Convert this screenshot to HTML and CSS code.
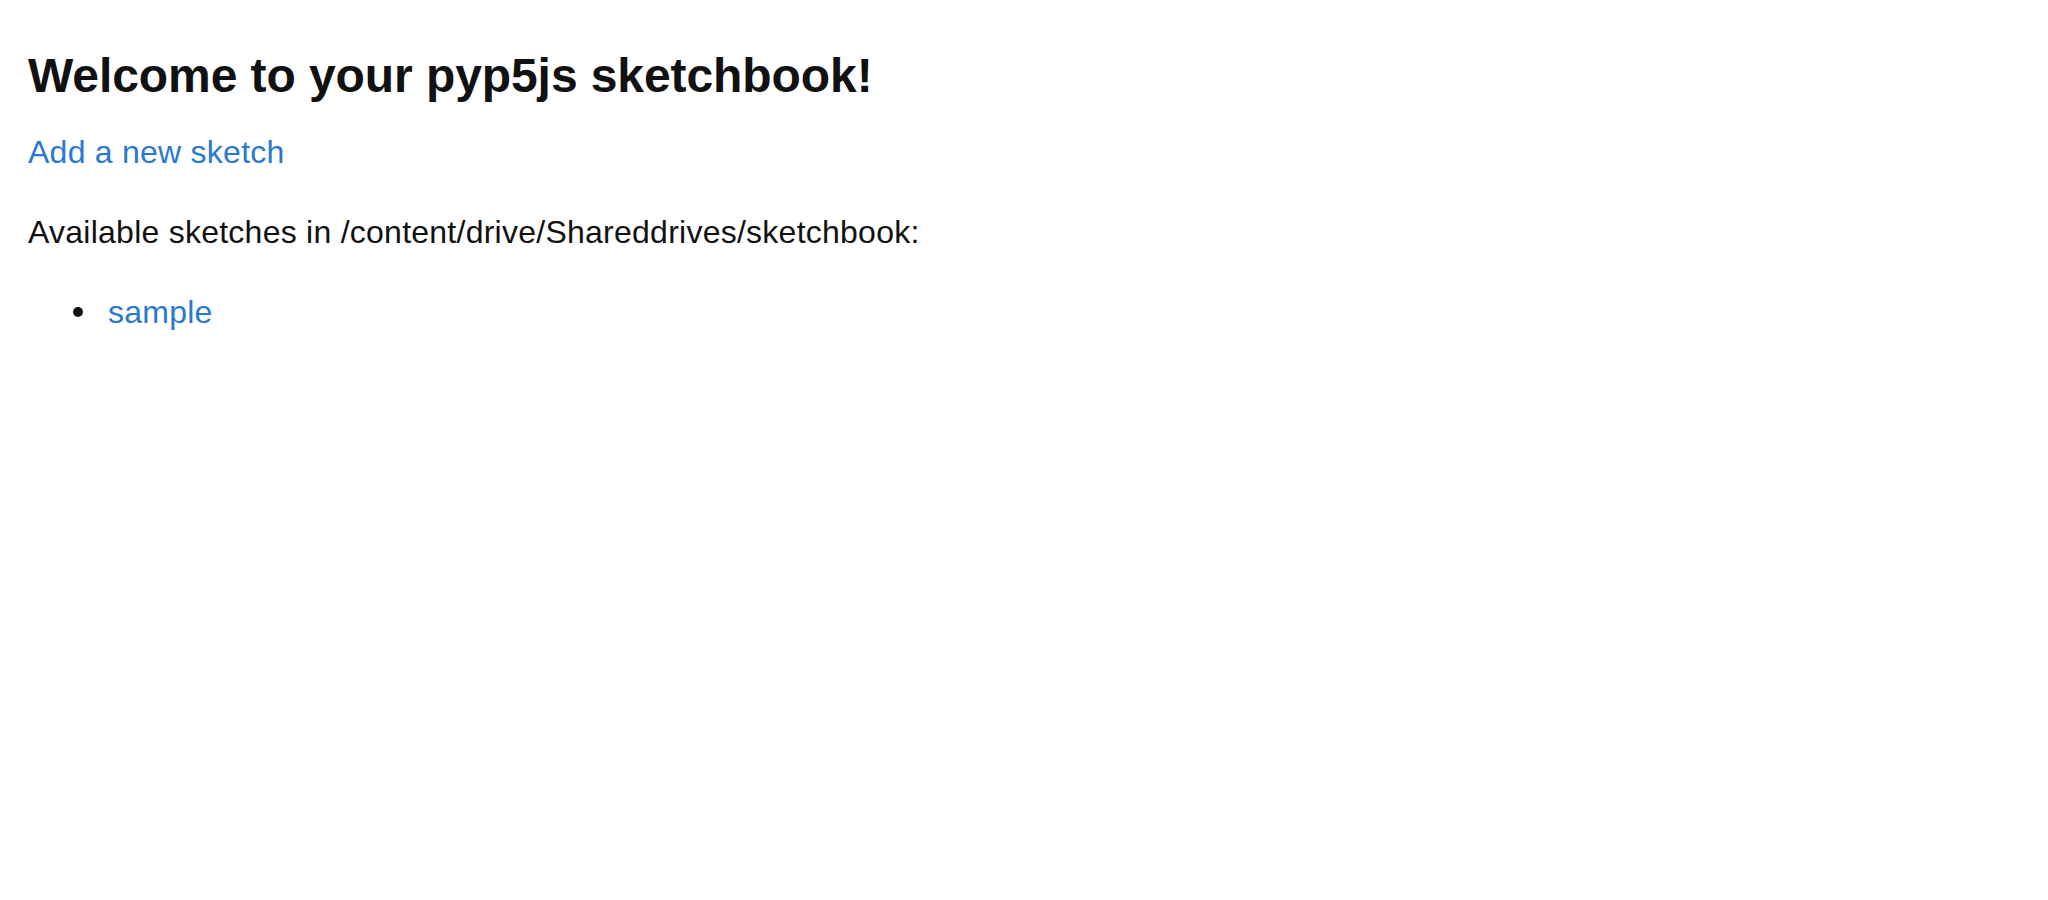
FILE: index.html
```html
<!DOCTYPE html>
<html lang="en">
<head>
<meta charset="utf-8">
<title>pyp5js sketchbook</title>
<link rel="stylesheet" href="styles.css">
</head>
<body>
<main class="page">
  <h1 class="title">Welcome to your pyp5js sketchbook!</h1>
  <p class="para"><a class="link" href="#">Add a new sketch</a></p>
  <p class="para">Available sketches in /content/drive/Shareddrives/sketchbook:</p>
  <ul class="sketches">
    <li class="item"><a class="link" href="#">sample</a></li>
  </ul>
</main>
</body>
</html>
```

FILE: styles.css
```css
html, body {
  margin: 0;
  padding: 0;
  background: #fff;
}
.page {
  padding: 40px 28px 0 28px;
  font-family: "Liberation Sans", Arial, Helvetica, sans-serif;
  font-size: 32px;
  line-height: 48px;
  letter-spacing: 0.25px;
  color: #111;
}
.title {
  margin: 0 0 16px 0;
  font-size: 48px;
  line-height: 72px;
  font-weight: 700;
  letter-spacing: -0.08px;
  color: #111;
}
.para {
  margin: 0 0 32px 0;
}
.link {
  color: #2b78d0;
  text-decoration: none;
}
.sketches {
  margin: 0;
  padding-left: 45px;
  list-style: none;
}
.item {
  display: flex;
  align-items: center;
  line-height: 48px;
}
.item::before {
  content: "";
  flex: none;
  width: 10px;
  height: 10px;
  margin-right: 25px;
  border-radius: 50%;
  background: #111;
}
```
